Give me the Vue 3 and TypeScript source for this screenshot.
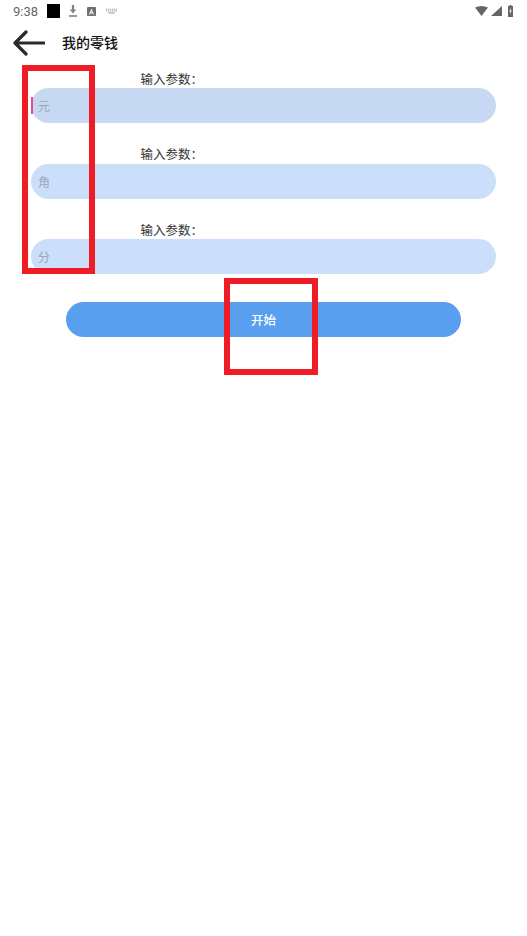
<script setup lang="ts">
const fields = [
    { key: 'yuan', label: '输入参数：', placeholder: '元', focused: true },
    { key: 'jiao', label: '输入参数：', placeholder: '角', focused: false },
    { key: 'fen', label: '输入参数：', placeholder: '分', focused: false }
];
</script>

<template>
    <div class="page">
        <div class="status-bar">
            <span class="status-bar__time">9:38</span>
            <span class="status-bar__black"></span>
            <svg class="status-bar__icon" width="8" height="12" viewBox="0 0 10 12" preserveAspectRatio="none">
                <path d="M3.6 0h2.8v4.5H9L5 8.6 1 4.5h2.6z" fill="#808080" />
                <rect x="0" y="10.2" width="10" height="1.6" fill="#808080" />
            </svg>
            <svg class="status-bar__icon status-bar__icon--a" width="9" height="9" viewBox="0 0 10 10">
                <rect width="10" height="10" rx="1" fill="#707070" />
                <path d="M5 1.8 7.8 8.2H6.5L6 7H4L3.5 8.2H2.2zM4.4 5.9h1.2L5 4.3z" fill="#fff" />
            </svg>
            <svg class="status-bar__icon status-bar__icon--kbd" width="11" height="6" viewBox="0 0 12 8" preserveAspectRatio="none">
                <path d="M0 1h1.3v1.3H0zm2.2 0h1.3v1.3H2.2zm2.2 0h1.3v1.3H4.4zm2.2 0h1.3v1.3H6.6zm2.2 0h1.3v1.3H8.8zm2 0H12v1.3h-1.2zM0 3.4h1.3v1.3H0zm2.2 0h1.3v1.3H2.2zm2.2 0h1.3v1.3H4.4zm2.2 0h1.3v1.3H6.6zm2.2 0h1.3v1.3H8.8zm2 0H12v1.3h-1.2zM2.5 6h7v1.2h-7z" fill="#999" />
            </svg>
            <span class="status-bar__spacer"></span>
            <svg width="13" height="10" viewBox="0 0 13 10">
                <path d="M0 1.6Q6.5-1.6 13 1.6L6.5 10z" fill="#666" />
            </svg>
            <svg class="status-bar__signal" width="11" height="10" viewBox="0 0 11 10">
                <path d="M11 0v10H0z" fill="#666" />
            </svg>
            <svg class="status-bar__battery" width="5" height="12" viewBox="0 0 6 11" preserveAspectRatio="none">
                <path d="M1.8 0h2.4v1H6v10H0V1h1.8z" fill="#666" />
                <path d="M3.4 2.4 1.6 6h1.2l-.3 2.8L4.4 5H3.1z" fill="#fff" />
            </svg>
        </div>

        <header class="top-bar">
            <svg class="top-bar__back" width="32" height="26" viewBox="0 0 32 26" fill="none">
                <path d="M13 2 2 13l11 11M2 13h29" stroke="#2b2b2b" stroke-width="3.2" stroke-linecap="round" stroke-linejoin="round" />
            </svg>
            <h1 class="top-bar__title">我的零钱</h1>
        </header>

        <main class="form">
            <div v-for="f in fields" :key="f.key" class="field">
                <label class="field__label">{{ f.label }}</label>
                <div class="field__input" :class="{ 'field__input--focused': f.focused }">
                    <span v-if="f.focused" class="field__caret"></span>
                    <span class="field__placeholder">{{ f.placeholder }}</span>
                </div>
            </div>
            <button type="button" class="start-btn">开始</button>

            <!-- 标注用的红框 -->
            <span class="mark mark--fields"></span>
            <span class="mark mark--btn"></span>
        </main>
    </div>
</template>

<style>
html,
body {
    margin: 0;
    background: #fff;
}
</style>

<style scoped>
.page {
    width: 527px;
    height: 936px;
    overflow: hidden;
    background: #fff;
    font-family: 'Noto Sans CJK SC', 'Roboto', sans-serif;
}

.status-bar {
    height: 22px;
    padding: 0 14px 0 13px;
    display: flex;
    align-items: center;
    box-sizing: border-box;
}

.status-bar__time {
    font-family: 'Roboto', sans-serif;
    font-size: 13px;
    color: #666;
    width: 34px;
}

.status-bar__black {
    width: 13px;
    height: 14px;
    background: #000;
    margin-right: 9px;
}

.status-bar__icon--a,
.status-bar__icon--kbd {
    margin-left: 10px;
}

.status-bar__spacer {
    flex: 1;
}

.status-bar__signal {
    margin-left: 3px;
}

.status-bar__battery {
    margin-left: 6px;
}

.top-bar {
    height: 42px;
    padding-left: 13px;
    display: flex;
    align-items: center;
}

.top-bar__title {
    margin: -2px 0 0 17px;
    font-size: 14px;
    font-weight: 500;
    color: #111;
}

.form {
    position: relative;
    padding: 6.5px 31px 0;
}

.field {
    display: flex;
    flex-direction: column;
    margin-bottom: 23px;
}

.field__label {
    height: 17.5px;
    line-height: 15px;
    margin-left: 109.5px;
    font-size: 12.5px;
    color: #333;
    white-space: nowrap;
}

.field__input {
    width: 100%;
    height: 35px;
    border-radius: 18px;
    background: #cbdffa;
    display: flex;
    align-items: center;
    padding-left: 7px;
    box-sizing: border-box;
    position: relative;
}

.field__input--focused {
    background: #c7d9f2;
}

.field__caret {
    position: absolute;
    left: 0;
    top: 9px;
    width: 2px;
    height: 17px;
    background: #f0488c;
}

.field__placeholder {
    font-size: 12px;
    color: #9aa7b8;
}

/* 上一个 field 的 margin-bottom 会折叠，这里要写总间距 */
.start-btn {
    display: block;
    width: 395px;
    height: 35px;
    margin: 28px auto 0;
    border: 0;
    border-radius: 18px;
    background: #5a9fef;
    color: #fff;
    font-family: inherit;
    font-size: 12.5px;
    font-weight: 500;
    padding: 0;
}

.mark {
    position: absolute;
    box-sizing: border-box;
    border: 6px solid #ee1c25;
    pointer-events: none;
}

.mark--fields {
    left: 22px;
    top: 1px;
    width: 73px;
    height: 209px;
}

.mark--btn {
    left: 224px;
    top: 214px;
    width: 94px;
    height: 97px;
}
</style>
